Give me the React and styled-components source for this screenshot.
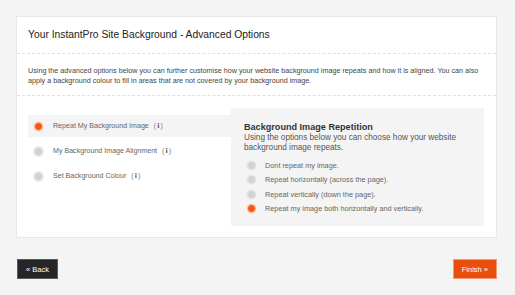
import React from 'react';
import styled, { createGlobalStyle } from 'styled-components';

const GlobalStyle = createGlobalStyle`
    body {
        margin: 0;
        background: #f4f4f4;
        font-family: "Liberation Sans", Arial, sans-serif;
        color: #555;
    }
`;

const menuItems = [
    { label: 'Repeat My Background Image', active: true },
    { label: 'My Background Image Alignment', active: false },
    { label: 'Set Background Colour', active: false }
];

const repeatOptions = [
    { label: 'Dont repeat my image.', checked: false },
    { label: 'Repeat horizontally (across the page).', checked: false },
    { label: 'Repeat vertically (down the page).', checked: false },
    { label: 'Repeat my image both horizontally and vertically.', checked: true }
];

const App = () => {
    return (
        <Page>
            <GlobalStyle />
            <Card>
                <Header>
                    <Title>Your InstantPro Site Background - Advanced Options</Title>
                </Header>
                <Intro>
                    Using the advanced options below you can further customise how your website
                    background image repeats and how it is aligned. You can also apply a background
                    colour to fill in areas that are not covered by your background image.
                </Intro>
                <Body>
                    <Menu>
                        {menuItems.map(item => (
                            <MenuItem key={item.label} active={item.active}>
                                <Radio checked={item.active} gap={10} />
                                {item.label}
                                <Info>(<b>i</b>)</Info>
                            </MenuItem>
                        ))}
                    </Menu>
                    <Panel>
                        <PanelTitle>Background Image Repetition</PanelTitle>
                        <PanelText>
                            Using the options below you can choose how your website background image repeats.
                        </PanelText>
                        <Options>
                            {repeatOptions.map(opt => (
                                <Option key={opt.label}>
                                    <Radio checked={opt.checked} gap={9} />
                                    {opt.label}
                                </Option>
                            ))}
                        </Options>
                    </Panel>
                </Body>
            </Card>
            <Footer>
                <Button>« Back</Button>
                <Button primary>Finish »</Button>
            </Footer>
        </Page>
    );
};

const Page = styled.div`
    padding: 16px 18px 0 16px;
`;

const Card = styled.div`
    background: white;
    border: 1px solid #e8e8e8;
`;

const Header = styled.div`
    padding: 11px 11px 11px;
    border-bottom: 1px dashed #e0e0e0;
`;

const Title = styled.h1`
    margin: 0;
    font-size: 10.3px;
    font-weight: normal;
    color: #222;
    line-height: 14px;
`;

const Intro = styled.p`
    margin: 0;
    padding: 12px 6px 9px 11px;
    font-size: 7.2px;
    line-height: 10px;
    color: #444;
    border-bottom: 1px dashed #e0e0e0;
`;

const Body = styled.div`
    display: flex;
    padding: 12px 12px 11px 11px;
`;

const Menu = styled.div`
    width: 203px;
    padding-top: 7px;
    display: flex;
    flex-direction: column;
    gap: 3px;
`;

const MenuItem = styled.div`
    display: flex;
    align-items: center;
    height: 22px;
    padding-left: 6px;
    font-size: 7.1px;
    color: #666;
    background: ${p => (p.active ? '#f4f4f4' : 'transparent')};
`;

const Info = styled.span`
    margin-left: 5px;
    letter-spacing: 1px;
    color: #777;

    b {
        font-family: "DejaVu Sans", sans-serif;
        font-size: 6.5px;
        color: #555;
    }
`;

const Radio = styled.span`
    width: 7px;
    height: 7px;
    border-radius: 50%;
    margin-right: ${p => p.gap}px;
    flex-shrink: 0;
    background: ${p => (p.checked ? '#f05a16' : '#d2d2d2')};
    border: 1px solid ${p => (p.checked ? '#f6c4a8' : '#e2e2e2')};
    box-shadow: 0 0 0 1px ${p => (p.checked ? '#fde6d8' : '#eeeeee')};
`;

const Panel = styled.div`
    flex: 1;
    background: #f4f4f4;
    padding: 13px 13px 12px 13px;
`;

const PanelTitle = styled.h2`
    margin: 0;
    font-size: 9.1px;
    font-weight: bold;
    color: #333;
    line-height: 12px;
`;

const PanelText = styled.p`
    margin: 0;
    width: 218px;
    font-size: 8.2px;
    line-height: 10px;
    color: #555;
`;

const Options = styled.div`
    margin-top: 7px;
    display: flex;
    flex-direction: column;
    gap: 4px;
    padding-left: 3px;
`;

const Option = styled.div`
    display: flex;
    align-items: center;
    height: 10.5px;
    font-size: 7.3px;
    color: #666;
`;

const Footer = styled.div`
    display: flex;
    justify-content: space-between;
    padding: 21px 0 0 1px;
`;

const Button = styled.button`
    height: 20px;
    padding: 0 8px;
    font-family: "Liberation Sans", Arial, sans-serif;
    font-size: 7.5px;
    color: white;
    background: ${p => (p.primary ? '#ea4e0c' : '#262626')};
    border: 1px solid ${p => (p.primary ? '#f59a74' : '#5a5a5a')};
    border-radius: 0;
`;

export default App;
